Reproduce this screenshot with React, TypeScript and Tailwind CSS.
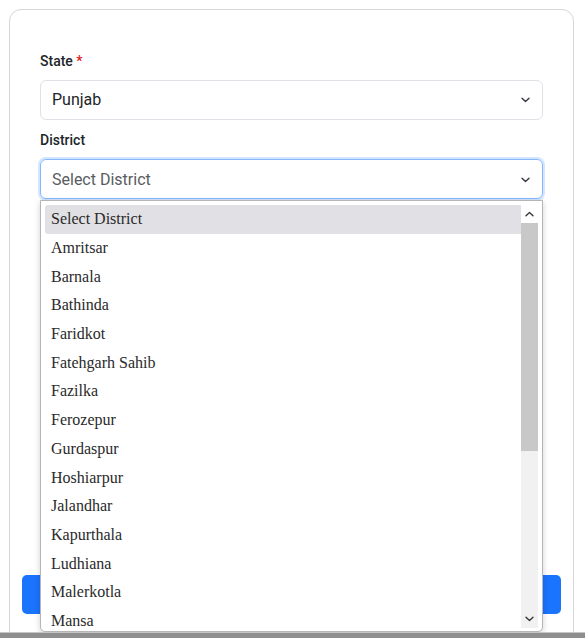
import React from 'react';

const districts = [
  'Select District',
  'Amritsar',
  'Barnala',
  'Bathinda',
  'Faridkot',
  'Fatehgarh Sahib',
  'Fazilka',
  'Ferozepur',
  'Gurdaspur',
  'Hoshiarpur',
  'Jalandhar',
  'Kapurthala',
  'Ludhiana',
  'Malerkotla',
  'Mansa',
];

function Chevron({ up = false }: { up?: boolean }) {
  return (
    <svg width="9" height="6" viewBox="0 0 9 6" className={up ? 'rotate-180' : ''}>
      <polyline points="1,1.2 4.5,4.6 8,1.2" fill="none" stroke="#343a40" strokeWidth="1.4" strokeLinecap="round" strokeLinejoin="round" />
    </svg>
  );
}

export default function App() {
  return (
    <div className="relative h-[638px] overflow-hidden bg-white font-['Roboto',sans-serif]">
      <div className="ml-[9px] mt-[9px] w-[565px] rounded-[12px] border border-[#d6d6d6] px-[30px] pt-[41px] pb-10">
        <label className="block text-[14px] leading-[21px] font-medium text-[#212529]">
          State <span className="text-[#e01b24]">*</span>
        </label>
        <div className="mt-[8px] flex h-[40px] items-center justify-between rounded-[6px] border border-[#dee2e6] pl-[11px] pr-[12px]">
          <span className="text-[16px] text-[#212529]">Punjab</span>
          <Chevron />
        </div>

        <label className="mt-[10px] block text-[14px] leading-[21px] font-medium text-[#212529]">District</label>
        <div className="mt-[8px] flex h-[40px] items-center justify-between rounded-[6px] border border-[#86b7fe] pl-[11px] pr-[12px] pt-[1px] shadow-[0_0_0_2px_rgba(13,110,253,0.18)]">
          <span className="text-[16px] text-[#595c5f]">Select District</span>
          <Chevron />
        </div>

        <button className="-mx-[18px] mt-[376px] block h-[39px] w-[539px] rounded-[5px] bg-[#1b74fd] text-white">
          Submit
        </button>
      </div>

      {/* open native-style listbox */}
      <div className="absolute left-[40px] top-[200px] flex h-[432px] w-[503px] overflow-hidden rounded-b-[5px] border border-[#b5b5b5] bg-white pt-[4px] pb-[3px] pl-[4px] pr-[4px] shadow-[0_2px_6px_rgba(0,0,0,0.18)] font-['Liberation_Serif',serif]">
        <ul className="flex-1">
          {districts.map((d, i) => (
            <li
              key={d}
              className={
                'flex h-[28.7px] items-center pl-[6px] text-[16px] text-[#2a2a2a] ' +
                (i === 0 ? 'rounded-l-[3px] bg-[#e1e0e5]' : '')
              }
            >
              {d}
            </li>
          ))}
        </ul>
        <div className="flex w-[17px] flex-col bg-[#f1f1f1]">
          <div className="flex h-[18px] items-center justify-center bg-white">
            <Chevron up />
          </div>
          <div className="h-[228px] bg-[#c8c8c8]" />
          <div className="flex-1" />
          <div className="flex h-[18px] items-center justify-center">
            <Chevron />
          </div>
        </div>
      </div>

      <div className="absolute bottom-0 left-0 h-[6px] w-full border-t border-[#c6c6c6] bg-[#8e8e8e]" />
    </div>
  );
}
